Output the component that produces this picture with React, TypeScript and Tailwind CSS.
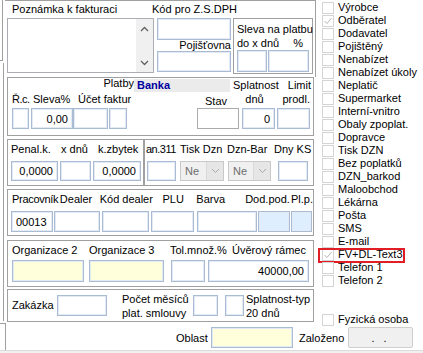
import React from "react";

const frame = "border-[#a0a0a0]";

function Field({
  className = "",
  right = false,
  children,
}: {
  className?: string;
  right?: boolean;
  children?: React.ReactNode;
}) {
  return (
    <div
      className={`shrink-0 border border-[#a9bcd4] shadow-[inset_0_0_0_1px_#e3eaf3] flex items-center px-[4px] ${
        right ? "justify-end" : ""
      } ${className}`}
    >
      {children}
    </div>
  );
}

function Combo({ className = "" }: { className?: string }) {
  return (
    <div className={`shrink-0 h-[20px] border border-[#c9c9c9] bg-[#f0f0f0] flex ${className}`}>
      <span className="flex-1 pl-[4px] leading-[18px] text-[#6d6d6d]">Ne</span>
      <span className="w-[17px] border-l border-[#d9d9d9] bg-[#e6e6e6] flex items-center justify-center">
        <svg width="9" height="6" viewBox="0 0 9 6">
          <polyline points="1,1 4.5,4.5 8,1" fill="none" stroke="#a8a8a8" strokeWidth="1" />
        </svg>
      </span>
    </div>
  );
}

function Check({
  label,
  checked = false,
  boxed = false,
  className = "",
}: {
  label: string;
  checked?: boolean;
  boxed?: boolean;
  className?: string;
}) {
  return (
    <div className={`relative flex h-[13px] ${className}`}>
      <span className="ml-[2px] mt-[1px] w-[12px] h-[12px] shrink-0 border border-[#d4d4d4] flex items-center justify-center">
        {checked && (
          <svg width="10" height="10" viewBox="0 0 10 10">
            <polyline points="1.5,5 4,7.5 8.5,2" fill="none" stroke="#b8b8b8" strokeWidth="1" />
          </svg>
        )}
      </span>
      <span className="ml-[4px] leading-[13px] whitespace-nowrap">{label}</span>
      {boxed && <span className="absolute -left-[2px] top-0 w-[87px] h-[15px] border-2 border-[#e11d26]" />}
    </div>
  );
}

const checks = [
  "Výrobce",
  "Odběratel",
  "Dodavatel",
  "Pojištěný",
  "Nenabízet",
  "Nenabízet úkoly",
  "Neplatič",
  "Supermarket",
  "Interní-vnitro",
  "Obaly zpoplat.",
  "Dopravce",
  "Tisk DZN",
  "Bez poplatků",
  "DZN_barkod",
  "Maloobchod",
  "Lékárna",
  "Pošta",
  "SMS",
  "E-mail",
  "FV+DL-Text3",
  "Telefon 1",
  "Telefon 2",
];

export default function App() {
  return (
    <div className="w-[423px] h-[353px] bg-white overflow-hidden flex flex-col font-['Liberation_Sans',Arial,sans-serif] text-[11px] leading-[14px] text-black">
      <div className="flex h-[323px]">
        {/* left side: form panels */}
        <div className="w-[320px] shrink-0 flex flex-col">
          <div className="flex h-[77px]">
            <div className="w-[4px] flex flex-col">
              <div className={`w-[3px] h-[61px] border-r border-b ${frame}`} />
              <div className={`mt-[2px] ml-[3px] flex-1 border-l ${frame}`} />
            </div>

            {/* note, VAT code, discount */}
            <div className={`ml-[1px] w-[311px] h-[77px] border-t border-r ${frame} flex`}>
              <div className="ml-[2px] w-[147px] flex flex-col">
                <div className="h-[17px] leading-[17px] pl-[5px] whitespace-nowrap">Poznámka k fakturaci</div>
                <div className="h-[55px] border border-[#abadb3] flex justify-end">
                  <div className="w-[17px] bg-[#f0f0f0] flex flex-col items-center justify-between pt-[7px] pb-[6px]">
                    <svg width="9" height="6" viewBox="0 0 9 6">
                      <polyline points="1,5 4.5,1.5 8,5" fill="none" stroke="#606060" strokeWidth="1.3" />
                    </svg>
                    <svg width="9" height="6" viewBox="0 0 9 6">
                      <polyline points="1,1 4.5,4.5 8,1" fill="none" stroke="#606060" strokeWidth="1.3" />
                    </svg>
                  </div>
                </div>
              </div>

              <div className="w-[77px] flex flex-col">
                <div className="h-[17px] leading-[17px] -ml-[2px] whitespace-nowrap">Kód pro Z.S.DPH</div>
                <Field className="ml-[3px] w-[74px] h-[22px]" />
                <div className="h-[11px] leading-[11px] text-right">Pojišťovna</div>
                <Field className="ml-[3px] w-[74px] h-[21px]" />
              </div>

              <div className={`ml-[2px] mt-[17px] w-[80px] h-[56px] border ${frame} pl-[3px] pt-[3px]`}>
                <div className="whitespace-nowrap">Sleva na platbu</div>
                <div className="flex">
                  <span>do x dnů</span>
                  <span className="ml-auto mr-[9px]">%</span>
                </div>
                <div className="flex h-[22px]">
                  <Field className="w-[30px]" />
                  <Field className="ml-[1px] w-[41px]" />
                </div>
              </div>
            </div>
          </div>

          <div className={`ml-[3px] pl-[3px] border-l ${frame} flex flex-col h-[244px]`}>
            {/* payments */}
            <div className={`w-[307px] h-[59px] shrink-0 border ${frame} flex flex-col`}>
              <div className="flex h-[14px]">
                <div className="w-[126px] text-right -mt-[2px]">Platby</div>
                <div className="w-[96px] h-[13px] mt-[1px] leading-[13px] bg-[#ebebeb] pl-[3px] font-bold text-[#0000a0]">
                  Banka
                </div>
                <div className="ml-[3px] w-[45px] whitespace-nowrap">Splatnost</div>
                <div className="w-[33px] text-right">Limit</div>
              </div>
              <div className="flex h-[14px] whitespace-nowrap">
                <div className="ml-[4px] w-[20px] tracking-[-0.5px]">Ř.c.</div>
                <div className="ml-[1px] w-[45px]">Sleva%</div>
                <div className="w-[127px]">Účet faktur</div>
                <div className="w-[27px] pt-[2px]">Stav</div>
                <div className="w-[45px] text-center">dnů</div>
                <div className="w-[33px] text-right">prodl.</div>
              </div>
              <div className="flex h-[21px] mt-[2px]">
                <Field className="ml-[4px] w-[17px]" />
                <Field className="ml-[2px] w-[42px]" right>
                  0,00
                </Field>
                <Field className="w-[35px]" />
                <Field className="ml-[1px] w-[18px]" />
                <div className="ml-[70px] w-[42px] shrink-0 border border-[#ababab]" />
                <Field className="ml-[3px] w-[33px]" right>
                  0
                </Field>
                <Field className="ml-[2px] w-[33px]" />
              </div>
            </div>

            {/* penalty + delivery notes */}
            <div className="flex mt-[3px] h-[47px] shrink-0">
              <div className={`w-[137px] h-[47px] border ${frame} flex flex-col`}>
                <div className="flex mt-[2px] h-[14px] whitespace-nowrap">
                  <div className="ml-[3px] w-[50px]">Penal.k.</div>
                  <div className="w-[37px]">x dnů</div>
                  <div>k.zbytek</div>
                </div>
                <div className="flex mt-[5px] h-[20px]">
                  <Field className="ml-[3px] w-[47px]" right>
                    0,0000
                  </Field>
                  <Field className="ml-[2px] w-[31px]" />
                  <Field className="ml-[2px] w-[48px]" right>
                    0,0000
                  </Field>
                </div>
              </div>
              <div className={`w-[170px] h-[47px] border ${frame} flex flex-col`}>
                <div className="flex mt-[2px] h-[14px] whitespace-nowrap">
                  <div className="ml-[1px] w-[34px] tracking-[-0.5px]">an.311</div>
                  <div className="w-[47px]">Tisk Dzn</div>
                  <div className="w-[47px]">Dzn-Bar</div>
                  <div>Dny KS</div>
                </div>
                <div className="flex mt-[5px] h-[20px]">
                  <Field className="ml-[2px] w-[29px]" />
                  <Combo className="ml-[4px] w-[44px]" />
                  <Combo className="ml-[4px] w-[43px]" />
                  <Field className="ml-[7px] w-[30px]" />
                </div>
              </div>
            </div>

            {/* staff, dealer */}
            <div className={`mt-[3px] w-[307px] h-[47px] shrink-0 border ${frame} flex flex-col`}>
              <div className="flex mt-[2px] h-[14px] whitespace-nowrap">
                <div className="ml-[4px] w-[48px] tracking-[-0.3px]">Pracovník</div>
                <div className="w-[40px]">Dealer</div>
                <div className="w-[63px]">Kód dealer</div>
                <div className="w-[34px]">PLU</div>
                <div className="w-[49px]">Barva</div>
                <div className="w-[46px]">Dod.pod.</div>
                <div>Pl.p.</div>
              </div>
              <div className="flex mt-[5px] h-[21px]">
                <Field className="ml-[3px] w-[42px]">00013</Field>
                <Field className="ml-[1px] w-[46px]" />
                <Field className="ml-[2px] w-[47px]" />
                <Field className="ml-[2px] w-[43px]" />
                <Field className="ml-[3px] w-[60px]" />
                <Field className="ml-[1px] w-[32px] bg-[#dfeefe]" />
                <Field className="ml-[1px] w-[21px] bg-[#dfeefe]" />
              </div>
            </div>

            {/* organisations, credit */}
            <div className={`mt-[4px] w-[307px] h-[47px] shrink-0 border ${frame} flex flex-col`}>
              <div className="flex mt-[2px] h-[14px] whitespace-nowrap">
                <div className="ml-[4px] w-[77px]">Organizace 2</div>
                <div className="w-[81px]">Organizace 3</div>
                <div className="w-[62px]">Tol.množ.%</div>
                <div>Úvěrový rámec</div>
              </div>
              <div className="flex mt-[3px] h-[22px]">
                <Field className="ml-[4px] w-[72px] bg-[#ffffdc]" />
                <Field className="ml-[5px] w-[75px] bg-[#ffffdc]" />
                <Field className="ml-[7px] w-[34px]" />
                <Field className="ml-[3px] w-[101px]" right>
                  40000,00
                </Field>
              </div>
            </div>

            {/* order, contract */}
            <div className={`mt-[2px] w-[307px] h-[33px] shrink-0 border ${frame} flex items-start whitespace-nowrap`}>
              <div className="ml-[4px] mt-[8px] w-[45px]">Zakázka</div>
              <Field className="mt-[5px] w-[50px] h-[21px]" />
              <div className="ml-[15px] mt-[2px] w-[71px]">
                <div>Počet měsíců</div>
                <div>plat. smlouvy</div>
              </div>
              <Field className="mt-[5px] w-[25px] h-[21px]" />
              <Field className="ml-[7px] mt-[5px] w-[19px] h-[21px]" />
              <div className="ml-[2px] mt-[2px]">
                <div>Splatnost-typ</div>
                <div>20 dnů</div>
              </div>
            </div>
          </div>
        </div>

        {/* right side: flags */}
        <div className="flex-1 pt-[1px] flex flex-col">
          {checks.map((c) => (
            <Check
              key={c}
              label={c}
              checked={c === "Odběratel" || c === "FV+DL-Text3"}
              boxed={c === "FV+DL-Text3"}
            />
          ))}
          <Check label="Fyzická osoba" className="mt-[26px]" />
        </div>
      </div>

      <div className="flex h-[27px]">
        <div className={`w-[6px] h-[27px] border-t border-r ${frame}`} />
        <div className="mt-[4px] h-[21px] flex items-center whitespace-nowrap">
          <div className="ml-[170px] w-[35px]">Oblast</div>
          <Field className="w-[82px] h-[21px] bg-[#ffffdc]" />
          <div className="ml-[6px] w-[49px]">Založeno</div>
          <div className="w-[65px] h-[21px] border border-[#cfcfcf] bg-[#f0f0f0] rounded-[2px] flex items-center justify-center tracking-[3px]">
            . .
          </div>
        </div>
      </div>
      <div className="h-[3px] bg-[#f0f0f0] border-t border-[#dcdcdc]" />
    </div>
  );
}
